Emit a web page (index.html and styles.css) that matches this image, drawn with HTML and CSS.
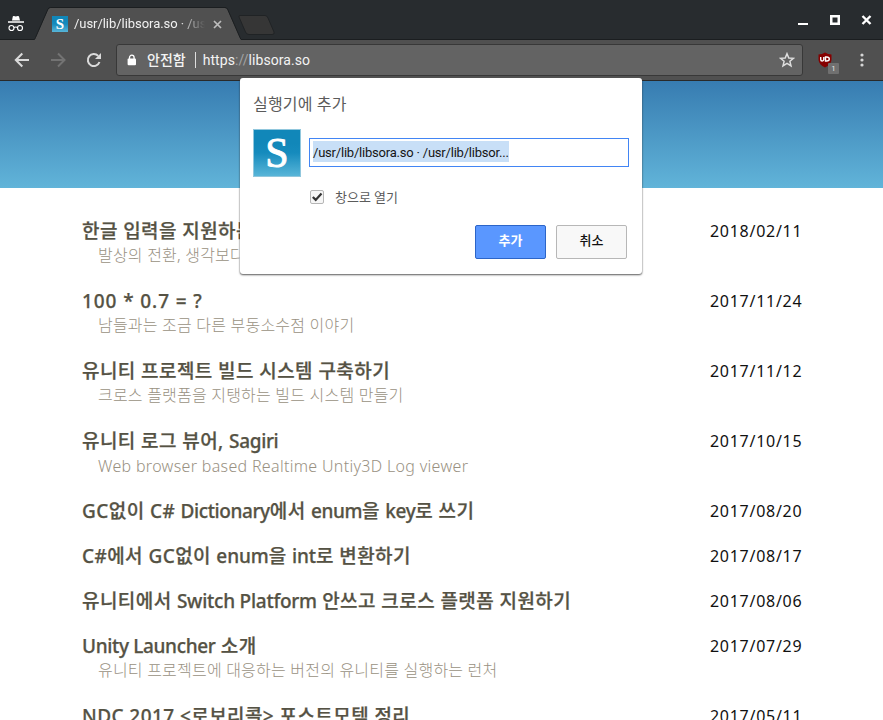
FILE: index.html
```html
<!DOCTYPE html>
<html lang="ko">
<head>
<meta charset="utf-8">
<title>/usr/lib/libsora.so</title>
<link rel="stylesheet" href="styles.css">
</head>
<body>
<div class="browser">
  <header class="tabstrip">
    <svg class="frame" width="883" height="40" viewBox="0 0 883 40">
      <path d="M34 40L35.500 38 48 9.500Q48.700 8 50.500 8H225Q226.700 8 227.500 9.500L240 38 241.500 40Z" fill="#505050"/>
      <path d="M0 39.500H34.500L35.500 37.500 48 9Q48.700 7.500 50.500 7.500H225Q226.700 7.500 227.500 9L240 37.500 241 39.500H883" fill="none" stroke="#1b1e20"/>
      <path d="M240 15.500H265Q267 15.500 268 18L274 32Q275 34.500 272 34.500H249Q246.500 34.500 245.500 32L239 17Q238.500 15.500 240 15.500Z" fill="#363636" stroke="#202325"/>
    </svg>
    <svg class="incognito" width="18" height="18" viewBox="0 0 18 18">
      <path d="M5 5.500 5.800 1.500Q6 .7 7 1L8.800 1.500 10.700 1Q11.700 .7 12 1.500L13 5.500Z" fill="#fff"/>
      <path d="M1 7H17" stroke="#fff" stroke-width="1.500"/>
      <circle cx="4.500" cy="13" r="2.500" fill="none" stroke="#fff" stroke-width="1.200"/>
      <circle cx="13" cy="13" r="2.500" fill="none" stroke="#fff" stroke-width="1.200"/>
      <path d="M7 12.500Q8.800 11.500 10.500 12.500" fill="none" stroke="#fff" stroke-width="1.200"/>
    </svg>
    <div class="tab">
      <span class="favicon small">S</span>
      <span class="tab-title">/usr/lib/libsora.so · /us</span>
      <svg class="tab-close" width="9" height="9" viewBox="0 0 9 9"><path d="M1 1 8 8M8 1 1 8" stroke="#bdbdbd" stroke-width="1.700"/></svg>
    </div>
    <svg class="window-buttons" width="78" height="14" viewBox="0 0 78 14">
      <path d="M1 11H11" stroke="#fff" stroke-width="2"/>
      <rect x="34.250" y="3.250" width="7.500" height="7.500" fill="none" stroke="#fff" stroke-width="2.500"/>
      <path d="M65.500 3 73.500 11M73.500 3 65.500 11" stroke="#fff" stroke-width="2.400"/>
    </svg>
  </header>
  <nav class="toolbar">
    <svg class="nav-icons" width="102" height="20" viewBox="0 0 102 20">
      <path d="M29 10H16M22.300 3.500 15.800 10 22.300 16.500" fill="none" stroke="#dadada" stroke-width="2"/>
      <path d="M51 10H64M58 3.500 64.500 10 58 16.500" fill="none" stroke="#737373" stroke-width="2"/>
      <path d="M99.500 12A6 6 0 1 1 98.200 5.900" fill="none" stroke="#dadada" stroke-width="2"/>
      <path d="M101 3V9H95Z" fill="#dadada"/>
    </svg>
    <div class="address">
      <svg width="10" height="12" viewBox="0 0 10 12"><path d="M2.500 5V3.500A2.300 2.300 0 0 1 7.100 3.500V5" fill="none" stroke="#fff" stroke-width="1.300"/><rect x=".6" y="4.500" width="8.400" height="6.700" rx="1" fill="#fff"/></svg>
      <span class="secure">안전함</span>
      <span class="url">https<i>://</i>libsora.so</span>
      <svg class="star" width="16" height="16" viewBox="0 0 16 16"><path d="M8 1.700 9.800 6 14.400 6.300 10.900 9.300 12 13.900 8 11.400 4 13.900 5.100 9.300 1.600 6.300 6.200 6Z" fill="none" stroke="#dedede" stroke-width="1.500"/></svg>
    </div>
    <div class="extension">
      <svg width="16" height="16" viewBox="0 0 16 16"><path d="M8 .5Q11 2.500 14.500 2.500V8Q14 12.500 8 15.500 2 12.500 1.500 8V2.500Q5 2.500 8 .5Z" fill="#850000"/><path d="M3.700 5V7.500Q3.700 9 5.200 9T6.800 7.500V5M8.500 5V9H9.500Q12.300 9 12.300 7T9.500 5Z" fill="none" stroke="#fff" stroke-width="1.400"/></svg>
      <span class="count">1</span>
    </div>
    <svg class="menu" width="4" height="16" viewBox="0 0 4 16"><g fill="#d6d6d6"><circle cx="2" cy="3" r="1.600"/><circle cx="2" cy="8" r="1.600"/><circle cx="2" cy="13" r="1.600"/></g></svg>
  </nav>
  <div class="banner"></div>
  <main class="posts">
    <article><h2 class="p1">한글 입력을 지원하는</h2><time>2018/02/11</time><p>발상의 전환, 생각보다</p></article>
    <article><h2 class="p2">100 * 0.7 = ?</h2><time>2017/11/24</time><p class="s2">남들과는 조금 다른 부동소수점 이야기</p></article>
    <article><h2 class="p3">유니티 프로젝트 빌드 시스템 구축하기</h2><time>2017/11/12</time><p class="s3">크로스 플랫폼을 지탱하는 빌드 시스템 만들기</p></article>
    <article><h2 class="p4">유니티 로그 뷰어, <span>Sagiri</span></h2><time>2017/10/15</time><p class="s4">Web browser based Realtime Untiy3D Log viewer</p></article>
    <article><h2 class="p5">GC없이 C# <span>Dictionary</span>에서 <span>enum</span>을 <span>key</span>로 쓰기</h2><time>2017/08/20</time></article>
    <article><h2 class="p6">C#에서 GC없이 <span>enum</span>을 <span>int</span>로 변환하기</h2><time>2017/08/17</time></article>
    <article><h2 class="p7">유니티에서 <span>Switch Platform</span> 안쓰고 크로스 플랫폼 지원하기</h2><time>2017/08/06</time></article>
    <article><h2 class="p8"><span>Unity Launcher</span> 소개</h2><time>2017/07/29</time><p class="s8">유니티 프로젝트에 대응하는 버전의 유니티를 실행하는 런처</p></article>
    <article><h2 class="p9">NDC 2017 &lt;로보리콜&gt; 포스트모템 정리</h2><time>2017/05/11</time></article>
  </main>
  <section class="dialog">
    <h1>실행기에 추가</h1>
    <div class="shortcut">
      <span class="favicon large">S</span>
      <div class="name"><mark>/usr/lib/libsora.so · /usr/lib/libsor...</mark></div>
    </div>
    <div class="option">
      <span class="check"><svg width="12" height="12" viewBox="0 0 12 12"><path d="M1.800 6 4.700 8.900 10.500 2.500" fill="none" stroke="#333" stroke-width="2.200"/></svg></span>
      <span>창으로 열기</span>
    </div>
    <div class="actions"><span class="button primary">추가</span><span class="button">취소</span></div>
  </section>
</div>
</body>
</html>
```
FILE: styles.css
```css
* { box-sizing: border-box; }
body { margin: 0; background: #fff; font-family: Roboto, "Noto Sans CJK KR", sans-serif; }
.browser { position: relative; height: 720px; overflow: hidden; }
.tabstrip { position: relative; height: 40px; background: #282c2f; display: flex; align-items: center; }
.frame { position: absolute; left: 0; top: 0; }
.incognito { margin: 8px 0 0 7px; position: relative; }
.tab { position: relative; display: flex; align-items: center; margin: 8px 0 0 27px; width: 170px; }
.favicon { flex: none; display: flex; align-items: center; justify-content: center; color: #fff; font-family: "Liberation Serif", serif; font-weight: bold; background: linear-gradient(#1187b9 0 30%, #168bbd 50%, #58b5d8); }
.small { width: 16px; height: 16px; font-size: 15px; line-height: 16px; }
.tab-title { width: 131px; margin-left: 6px; overflow: hidden; white-space: nowrap; font-size: 13px; line-height: 16px; letter-spacing: -.05px; color: #f1f1f1; -webkit-mask-image: linear-gradient(90deg, #000 105px, transparent 131px); }
.tab-close { margin-left: 8px; flex: none; }
.window-buttons { margin: 0 8px 0 auto; }
.toolbar { height: 41px; background: #505050; border-bottom: 1px solid #292929; display: flex; align-items: center; }
.nav-icons { flex: none; }
.address { width: 687px; height: 32px; margin-left: 14px; border: 1px solid #383838; border-radius: 3px; background: #636363; display: flex; align-items: center; padding: 0 7px 0 10px; font-size: 14px; color: #f3f3f3; }
.secure { margin-left: 10px; line-height: 16px; font-weight: 500; white-space: nowrap; }
.url { border-left: 1px solid #ddd; margin-left: 9px; padding-left: 7px; line-height: 16px; letter-spacing: .07px; }
.url i { color: #a4a4a4; font-style: normal; }
.star { margin-left: auto; }
.extension { position: relative; margin-left: 14px; height: 16px; }
.count { position: absolute; left: 11px; top: 11px; width: 11px; height: 11px; background: #707070; color: #eee; border-radius: 1px; font-size: 7px; line-height: 12px; text-align: center; }
.menu { margin-left: 26.5px; }
.banner { height: 107px; background: linear-gradient(#377cb1, #61b4d9); }
.posts { width: 720px; margin: 31px 0 0 82px; font-family: "Noto Sans", "Noto Sans CJK KR", sans-serif; }
article { display: grid; grid-template-columns: 1fr 92px; margin-bottom: 20px; line-height: 25px; grid-auto-rows: 25px; white-space: nowrap; }
h2 { margin: 0; font-size: 19px; font-weight: 500; color: #555244; letter-spacing: .43px; -webkit-text-stroke: .25px #555244; }
h2 span { letter-spacing: -.1px; }
.p2 { letter-spacing: .9px; }
.p4 span { letter-spacing: -.35px; }
.p5 span { letter-spacing: -.4px; }
.p7 span { letter-spacing: -.25px; }
.p8 span { letter-spacing: -.35px; }
time { color: #111; font-size: 16px; font-weight: 400; letter-spacing: .72px; }
p { grid-column: 1; margin: -1px 0 0 16px; color: #999182; font-size: 16px; font-weight: 300; letter-spacing: .21px; }
p.s4 { margin-top: 0; letter-spacing: .32px; }
.dialog { position: absolute; left: 240px; top: 78px; width: 402px; height: 196px; padding: 15px 13px; background: #fff; border-radius: 3px; box-shadow: 0 0 1px #777, 0 1px 2px rgba(0,0,0,.65); color: #5b5b5b; }
h1 { margin: 0; font-size: 16px; line-height: 23px; font-weight: 400; letter-spacing: .2px; }
.shortcut { margin-top: 13px; display: flex; align-items: center; }
.large { width: 48px; height: 48px; border: 1px solid #91c7dd; font-size: 42px; line-height: 46px; font-weight: 400; -webkit-text-stroke: .9px #fff; }
.name { width: 320px; height: 29px; margin: -2px 0 0 8px; padding: 2px 3px; border: 1px solid #4285f4; font-size: 13px; }
.name mark { display: inline-block; height: 21px; line-height: 23px; background: #c8dff7; color: #151515; white-space: nowrap; letter-spacing: -.21px; }
.option { display: flex; align-items: center; margin: 12px 0 0 57px; font-size: 13px; line-height: 16px; }
.option span:last-child { padding-top: 1px; margin-bottom: -1px; }
.check { width: 14px; height: 14px; border: 1px solid #b6b6b6; border-radius: 2px; background: #f6f6f6; margin-right: 11px; display: flex; }
.actions { display: flex; justify-content: flex-end; gap: 10px; margin: 20px 2px 0 0; }
.button { width: 71px; height: 34px; border: 1px solid #b7b7b7; border-radius: 2px; background: #f8f8f8; color: #111; text-align: center; font-size: 13px; line-height: 30px; font-weight: 500; }
.primary { background: #5a97ff; border-color: #2c65c8; color: #fff; font-weight: 700; }
```
